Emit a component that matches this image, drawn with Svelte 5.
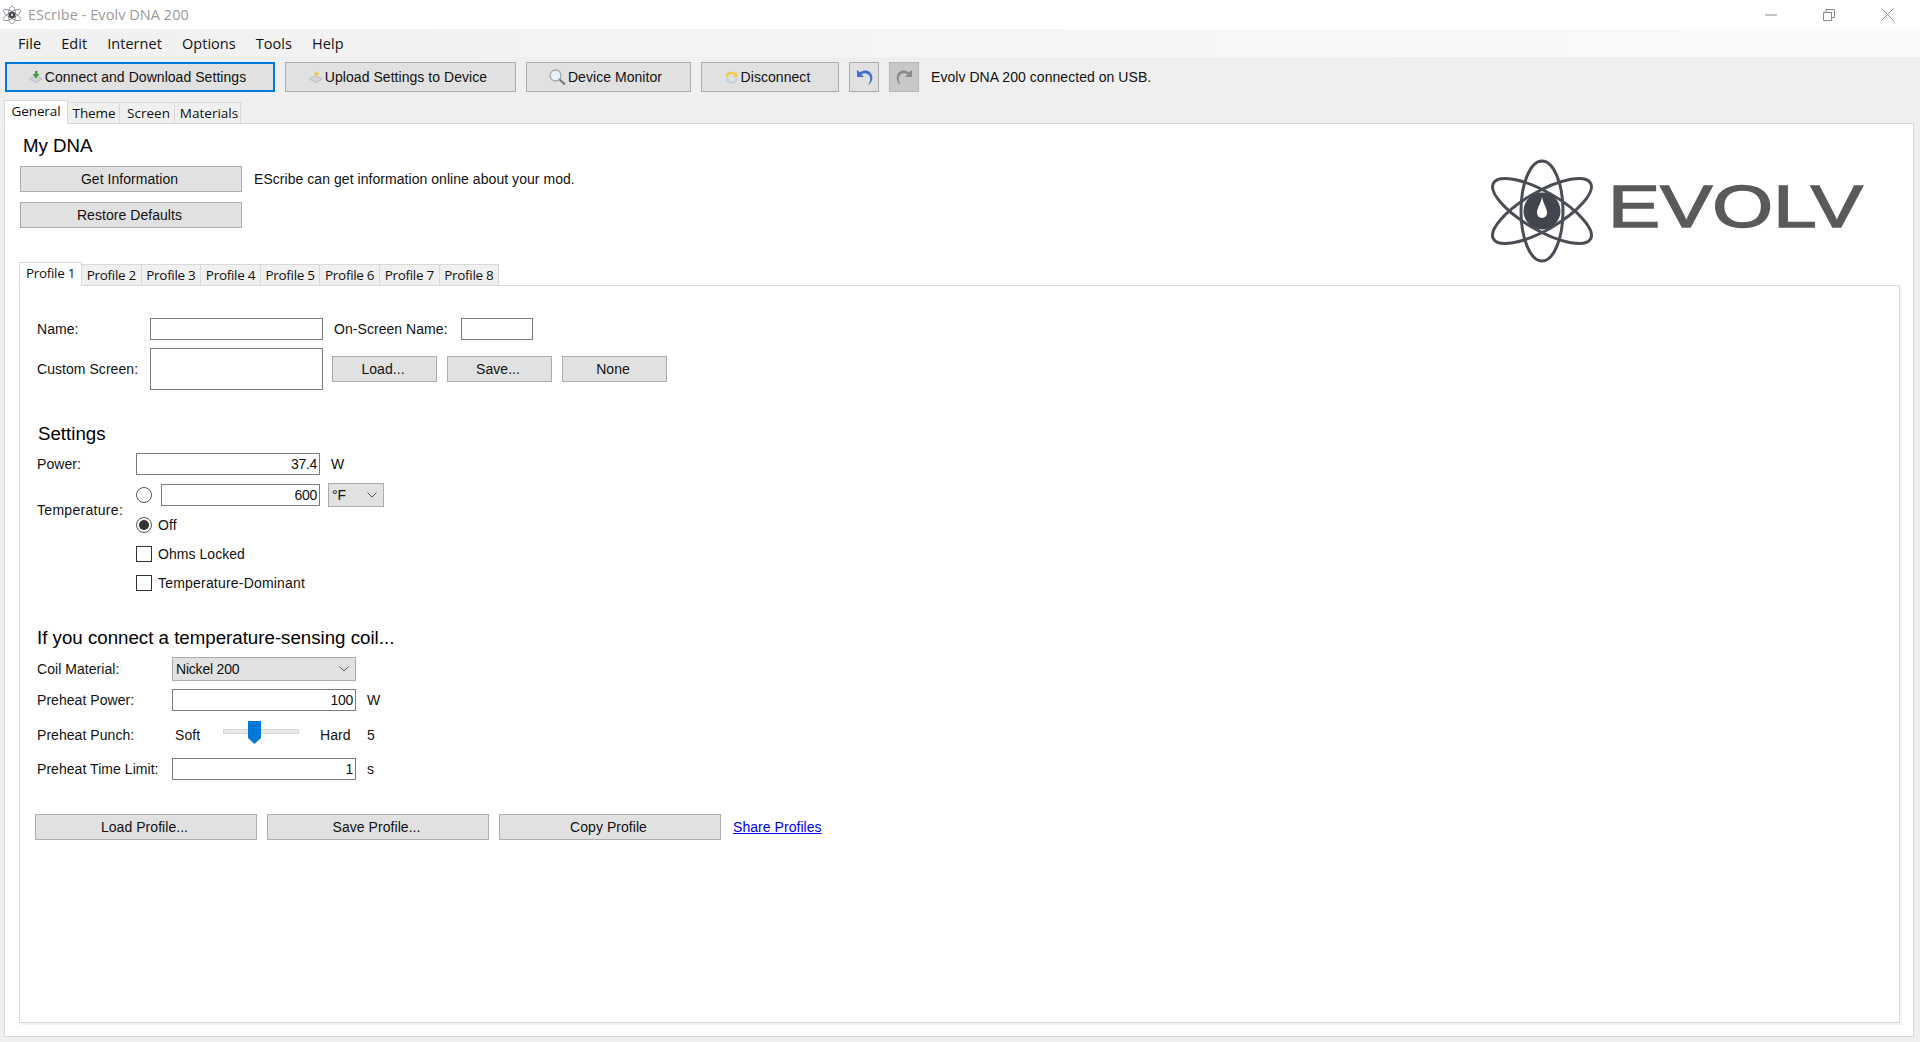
<script>
  const menus = ['File', 'Edit', 'Internet', 'Options', 'Tools', 'Help'];
  const mainTabs = ['General', 'Theme', 'Screen', 'Materials'];
  const profiles = [1, 2, 3, 4, 5, 6, 7, 8];
</script>

{#snippet atomShapes()}
  <g fill="none" stroke="#4a4d55" stroke-width="3">
    <ellipse cx="51" cy="52" rx="21" ry="50" />
    <ellipse cx="51" cy="52" rx="19" ry="56" transform="rotate(60 51 52)" />
    <ellipse cx="51" cy="52" rx="19" ry="56" transform="rotate(-60 51 52)" />
  </g>
  <circle cx="51" cy="52" r="18.500" fill="#42454e" />
  <path d="M51 38 C52 44 56 49 56 54 A5 5 0 0 1 46 54 C46 49 50 44 51 38Z" fill="#fff" />
{/snippet}

{#snippet disk()}
  <path d="M1 8l6-3 7 3-6 3.500z" fill="#d3d6d9" stroke="#a9adb2" stroke-width=".6" />
{/snippet}

<div class="app">
  <header class="titlebar">
    <span class="title-icon">
      <svg width="18" height="18" viewBox="0 0 102 104" aria-hidden="true">{@render atomShapes()}</svg>
    </span>
    <span class="title">EScribe - Evolv DNA 200</span>
    <div class="win">
      <svg width="12" height="2" viewBox="0 0 12 2"><path d="M0 1H12" stroke="#8a8a8a" /></svg>
      <svg width="12" height="12" viewBox="0 0 12 12"><path d="M.5 3.500h8v8h-8zM3 3.500V.5h8.500v8H8.500" fill="none" stroke="#8a8a8a" /></svg>
      <svg width="13" height="13" viewBox="0 0 13 13"><path d="M.5.5l12 12M12.500.5l-12 12" stroke="#8a8a8a" /></svg>
    </div>
  </header>

  <nav class="menubar">
    {#each menus as m}<span class="menu">{m}</span>{/each}
  </nav>

  <div class="toolbar">
    <button class="btn primary w-connect">
      <svg width="15" height="12" viewBox="0 0 15 12">{@render disk()}<path d="M7 0h2.500v3H11.500L8 7.500 4.500 3H7z" fill="#3f9f3a" /></svg>
      Connect and Download Settings
    </button>
    <button class="btn w-upload">
      <svg width="15" height="12" viewBox="0 0 15 12">{@render disk()}<path d="M8.500 0l3 3.500H10V6H7V3.500H5.500z" fill="#f0c94e" /></svg>
      Upload Settings to Device
    </button>
    <button class="btn w-monitor">
      <svg width="17" height="16" viewBox="0 0 17 16"><circle cx="6.500" cy="6.500" r="5.500" fill="#eaf2f8" stroke="#9aa5b0" stroke-width="1.300" /><path d="M10.500 10.500l5.500 5" stroke="#6d7680" stroke-width="2" /></svg>
      Device Monitor
    </button>
    <button class="btn w-disconnect">
      <svg width="15" height="15" viewBox="0 0 15 15"><path d="M1.500 7.500A6 6 0 0 1 12 3.500L13.500 2v5H8.500l1.800-1.800A3.500 3.500 0 0 0 4 7.500z" fill="#f2c94c" /><path d="M13.500 8A6 6 0 0 1 3 12L1.500 13.500V8.500h5l-1.800 1.800A3.500 3.500 0 0 0 11 8z" fill="#c7d3de" /></svg>
      Disconnect
    </button>
    <button class="btn square">
      <svg width="17" height="17" viewBox="0 0 17 17"><path d="M1 1v7h7L5.500 5.500C8 3.500 12 4 13.500 7 15 10 14 13 12 16c3.500-2 5-6 4-9.500C15 2 9-.5 4 3.300z" fill="#3f6fd1" /></svg>
    </button>
    <button class="btn square disabled">
      <svg width="17" height="17" viewBox="0 0 17 17"><path d="M16 1v7H9l2.500-2.500C9 3.500 5 4 3.500 7 2 10 3 13 5 16 1.500 14 0 10 1 6.500 2 2 8-.5 13 3.300z" fill="#8a8a8a" /></svg>
    </button>
    <span class="status">Evolv DNA 200 connected on USB.</span>
  </div>

  <div class="tabs outer-tabs">
    {#each mainTabs as t, i}
      <span class="tab tab-{t.toLowerCase()}" class:active={i === 0}>{t}</span>
    {/each}
  </div>

  <main class="panel">
    <section class="mydna">
      <div class="mydna-left">
        <h2>My DNA</h2>
        <div class="info-row">
          <button class="btn wide">Get Information</button>
          <span>EScribe can get information online about your mod.</span>
        </div>
        <button class="btn wide restore">Restore Defaults</button>
      </div>
      <svg class="logo" width="373" height="104" viewBox="0 0 373 104" aria-label="Evolv logo">
        {@render atomShapes()}
        <text x="117" y="68" textLength="255" lengthAdjust="spacingAndGlyphs" class="logo-text">EVOLV</text>
      </svg>
    </section>

    <div class="tabs inner-tabs">
      {#each profiles as p}
        <span class="tab ptab" class:active={p === 1}>Profile {p}</span>
      {/each}
    </div>

    <section class="profile">
      <div class="row name-row">
        <label class="l-name" for="n">Name:</label>
        <input id="n" class="in w173" />
        <span class="l-osn">On-Screen Name:</span>
        <input class="in w72" />
      </div>
      <div class="row custom-row">
        <span class="l-name">Custom Screen:</span>
        <div class="screenbox"></div>
        <div class="screen-btns">
          <button class="btn w105">Load...</button>
          <button class="btn w105">Save...</button>
          <button class="btn w105">None</button>
        </div>
      </div>

      <h3 class="settings">Settings</h3>
      <div class="row power-row">
        <span class="l-set">Power:</span>
        <input class="in w184 num" value="37.4" />
        <span class="unit">W</span>
      </div>
      <div class="temp-grid">
        <span class="temp-label">Temperature:</span>
        <div class="temp-row">
          <span class="radio"></span>
          <input class="in w159 num" value="600" />
          <span class="select w56"><span>°F</span><svg width="10" height="6" viewBox="0 0 10 6"><path d="M.5.5L5 5 9.500.5" fill="none" stroke="#555" /></svg></span>
        </div>
        <div class="opt off"><span class="radio on"></span>Off</div>
        <div class="opt ohms"><span class="check"></span>Ohms Locked</div>
        <div class="opt dom"><span class="check"></span>Temperature-Dominant</div>
      </div>

      <h3 class="coil-h">If you connect a temperature-sensing coil...</h3>
      <div class="row coil-row">
        <span class="l-coil">Coil Material:</span>
        <span class="select w184s"><span>Nickel 200</span><svg width="10" height="6" viewBox="0 0 10 6"><path d="M.5.5L5 5 9.500.5" fill="none" stroke="#555" /></svg></span>
      </div>
      <div class="row pp-row">
        <span class="l-coil">Preheat Power:</span>
        <input class="in w184 num" value="100" />
        <span class="unit">W</span>
      </div>
      <div class="row punch-row">
        <span class="l-coil">Preheat Punch:</span>
        <span class="soft">Soft</span>
        <div class="slider">
          <div class="track"></div>
          <svg class="thumb" width="13" height="23" viewBox="0 0 13 23"><path d="M0 0h13v17l-6.500 6L0 17z" fill="#0078d7" /></svg>
        </div>
        <span class="hard">Hard</span>
        <span class="five">5</span>
      </div>
      <div class="row tl-row">
        <span class="l-coil">Preheat Time Limit:</span>
        <input class="in w184 num" value="1" />
        <span class="unit">s</span>
      </div>
      <div class="row prof-btns">
        <button class="btn w222">Load Profile...</button>
        <button class="btn w222">Save Profile...</button>
        <button class="btn w222">Copy Profile</button>
        <a class="share" href="#share">Share Profiles</a>
      </div>
    </section>
  </main>
</div>

<style>
  :global(body) { margin: 0; background: #efefef; }
  .app {
    width: 1920px; height: 1042px; overflow: hidden;
    display: flex; flex-direction: column;
    background: #efefef; color: #111;
    font: 14px/18px "Liberation Sans", Arial, sans-serif;
    letter-spacing: .05px;
  }
  .titlebar { height: 29px; background: #fff; display: flex; align-items: center; flex: none; }
  .title-icon { display: flex; margin-left: 3px; width: 19px; }
  .title { margin-left: 6px; color: #9a9a9a; font: 14.5px/18px "Open Sans", sans-serif; }
  .win { margin-left: auto; display: flex; align-items: center; gap: 46px; padding-right: 26px; }
  .menubar {
    height: 28px; flex: none; display: flex; align-items: center; padding-left: 8px;
    background: linear-gradient(to right, #f0f0f0, #fbfbfb);
  }
  .menu { font: 14.5px/18px "Open Sans", sans-serif; padding: 0 10px; position: relative; top: 1px; }
  .toolbar { height: 43px; flex: none; display: flex; align-items: flex-start; padding: 5px 0 0 5px; gap: 10px; box-sizing: border-box; }
  .btn {
    box-sizing: border-box; height: 26px; padding: 0 3px 0 0; margin: 0;
    display: inline-flex; align-items: center; justify-content: center; gap: 2px;
    background: #e1e1e1; border: 1px solid #adadad; color: #111;
    font: inherit; letter-spacing: inherit; white-space: nowrap;
  }
  .toolbar .btn { height: 30px; padding-right: 6px; }
  .toolbar .square { padding: 0; }
  .primary { border: 2px solid #0078d7; }
  .w-connect { width: 270px; }
  .w-upload { width: 231px; }
  .w-monitor { width: 165px; }
  .w-disconnect { width: 138px; }
  .square { width: 30px; }
  .disabled { background: #c8c8c8; border-color: #b4b4b4; }
  .status { margin-left: 2px; line-height: 30px; }

  .tabs { display: flex; align-items: flex-end; flex: none; }
  .outer-tabs { height: 24px; margin: 0 0 -1px 4px; position: relative; z-index: 1; }
  .tab {
    box-sizing: border-box; height: 22px; display: flex; align-items: center; justify-content: center;
    background: #f0f0f0; border: 1px solid #d9d9d9; border-left: 0;
    font: 13.5px/18px "Open Sans", sans-serif; letter-spacing: -.1px;
  }
  .tab.active { height: 24px; background: #fff; border-left: 1px solid #d9d9d9; border-bottom-color: #fff; padding-bottom: 3px; }
  .tab-general { width: 64px; }
  .tab-theme { width: 52px; padding-left: 1px; }
  .tab-screen { width: 55px; padding-left: 3px; letter-spacing: 0; }
  .tab-materials { width: 66px; padding-left: 3px; letter-spacing: 0; }

  .panel {
    flex: none; box-sizing: border-box; height: 914px; margin: 0 6px 0 4px;
    background: #fff; border: 1px solid #d9d9d9; padding-left: 14px;
  }
  .mydna { display: flex; justify-content: space-between; height: 138px; padding-right: 49px; }
  .mydna-left { padding-top: 10px; padding-left: 1px; }
  h2, h3 { margin: 0; font-weight: 400; font-size: 18.7px; line-height: 24px; color: #000; letter-spacing: 0; }
  h2 { padding-left: 3px; }
  .info-row { display: flex; align-items: center; gap: 12px; margin-top: 8px; }
  .wide { width: 222px; }
  .restore { margin-top: 10px; }
  .logo { margin-top: 35px; flex: none; overflow: visible; }
  .logo-text { font: 400 60px "Liberation Sans", sans-serif; fill: #5a5a5a; stroke: #5a5a5a; stroke-width: 1.5px; }

  .inner-tabs { height: 24px; margin-bottom: -1px; position: relative; z-index: 1; }
  .ptab { width: 59.6px; letter-spacing: -.3px; }
  .ptab.active { width: 63px; }
  .profile {
    box-sizing: border-box; height: 738px; margin-right: 13px; padding: 32px 0 0 17px;
    border: 1px solid #d9d9d9; box-shadow: 2px 2px 0 #f3f3f3;
  }
  .row { display: flex; align-items: center; }
  .in {
    box-sizing: border-box; height: 22px; padding: 0 2px; margin: 0; flex: none;
    border: 1px solid #7a7a7a; background: #fff; color: #111; font: inherit; letter-spacing: -.3px; outline: 0;
  }
  .num { text-align: right; }
  .w173 { width: 173px; }
  .w72 { width: 72px; }
  .w184 { width: 184px; }
  .w159 { width: 159px; }
  .l-name { width: 113px; flex: none; }
  .l-osn { width: 127px; margin-left: 11px; flex: none; }
  .custom-row { margin-top: 8px; }
  .screenbox { box-sizing: border-box; width: 173px; height: 42px; border: 1px solid #7a7a7a; flex: none; }
  .screen-btns { display: flex; gap: 10px; margin-left: 9px; }
  .w105 { width: 105px; }
  .settings { margin-top: 32px; padding-left: 1px; }
  .power-row { margin-top: 7px; }
  .l-set { width: 99px; flex: none; }
  .unit { margin-left: 11px; }
  .temp-grid { display: grid; grid-template-columns: 99px 1fr; margin-top: 8px; }
  .temp-label { grid-row: 1 / 3; align-self: center; letter-spacing: .3px; }
  .temp-row { display: flex; align-items: center; height: 24px; grid-column: 2; }
  .radio {
    box-sizing: border-box; width: 16px; height: 16px; border-radius: 50%; border: 1px solid #555; background: #fff; flex: none;
    display: inline-flex; align-items: center; justify-content: center;
  }
  .radio.on::after { content: ""; width: 10px; height: 10px; border-radius: 50%; background: #333; }
  .temp-row .in { margin-left: 9px; }
  .select {
    box-sizing: border-box; height: 24px; display: flex; align-items: center; justify-content: space-between;
    background: #e1e1e1; border: 1px solid #adadad; padding: 0 6px 0 3px; flex: none; letter-spacing: -.2px;
  }
  .w56 { width: 56px; margin-left: 8px; }
  .w184s { width: 184px; }
  .opt { grid-column: 2; display: flex; align-items: center; gap: 6px; height: 22px; }
  .off { height: 24px; margin-top: 6px; }
  .ohms { margin-top: 6px; }
  .dom { margin-top: 7px; letter-spacing: .2px; }
  .check { box-sizing: border-box; width: 16px; height: 16px; border: 1px solid #333; background: #fff; flex: none; }
  .coil-h { margin-top: 32px; }
  .coil-row { margin-top: 7px; }
  .l-coil { width: 135px; flex: none; }
  .pp-row { margin-top: 8px; }
  .punch-row { margin-top: 10px; height: 28px; }
  .soft { margin-left: 3px; width: 48px; flex: none; }
  .slider { position: relative; width: 76px; height: 28px; flex: none; display: flex; align-items: center; }
  .track { width: 100%; height: 5px; margin-top: -7px; background: #e7eaea; border: 1px solid #d6d6d6; box-sizing: border-box; }
  .thumb { position: absolute; left: 25px; top: 0; }
  .hard { margin-left: 21px; width: 47px; flex: none; }
  .tl-row { margin-top: 9px; }
  .prof-btns { margin: 34px 0 0 -2px; gap: 10px; }
  .w222 { width: 222px; }
  .share { margin-left: 2px; color: #0000ee; text-decoration: underline; }
</style>
